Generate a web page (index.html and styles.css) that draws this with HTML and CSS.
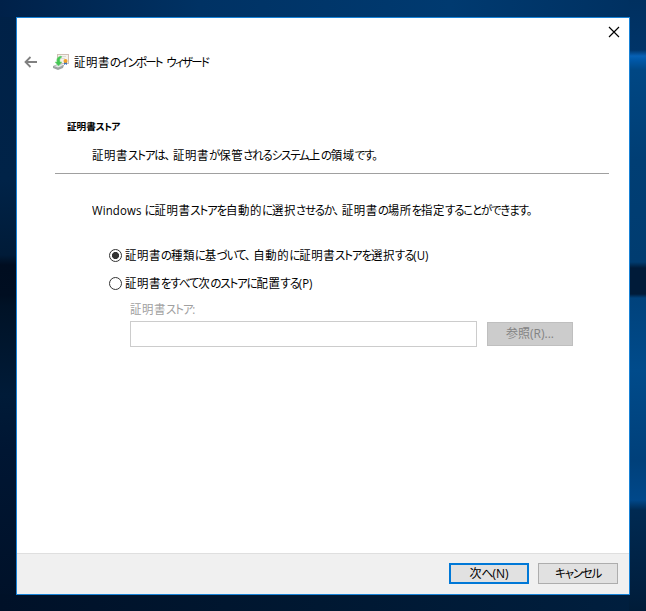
FILE: index.html
```html
<!DOCTYPE html>
<html lang="ja">
<head>
<meta charset="utf-8">
<title>証明書のインポート ウィザード</title>
<link rel="stylesheet" href="styles.css">
</head>
<body>
<main class="window">
  <button class="close" aria-label="閉じる"><svg width="12" height="12" viewBox="0 0 12 12"><path d="M1 1l10 10M11 1L1 11" stroke="#000" stroke-width="1.15" fill="none"/></svg></button>
  <header class="titlebar">
    <svg class="back" width="14" height="12" viewBox="0 0 14 12"><path d="M13 6H2M6.500 1L1.500 6l5 5" fill="none" stroke="#808080" stroke-width="1.8"/></svg>
    <svg class="cert" width="16" height="16" viewBox="0 0 16 16">
      <rect x="4.500" y=".5" width="11" height="9" fill="#f5f2ed" stroke="#d0bfb4"/>
      <path d="M6 2.500h7M7 4.500h5" stroke="#ddd9d6"/>
      <path d="M0 12l5-2 6 1-1 3-5 2-5-2z" fill="#9da3a3"/>
      <path d="M1 12l5-1.500 4 1-5 2z" fill="#e2e6e5"/>
      <path d="M8 2C4 3 3.500 5 4 8L2 8l3.500 4L9 8H7C6.500 5 7 4 9 3z" fill="#43c653" stroke="#79d481" stroke-width=".5"/>
      <path d="M11 8v3l1.500-1 1.500 1V8z" fill="#3d73bd"/>
      <circle cx="12.500" cy="7" r="2" fill="#efa126"/>
    </svg>
    <h1 class="line fit title">証明書<span class="k">のインポート ウィザード</span></h1>
  </header>
  <section class="intro">
    <h2 class="line heading">証明書<span class="k">ストア</span></h2>
    <p class="line fit desc">証明書<span class="k">ストアは<span class="c">、</span></span>証明書<span class="k">が</span>保管<span class="k">されるシステム</span>上<span class="k">の</span>領域<span class="k">です。</span></p>
  </section>
  <section class="content">
    <p class="line fit lead"><span class="latin">Windows </span><span class="k">に</span>証明書<span class="k">ストアを</span>自動的<span class="k">に</span>選択<span class="k">させるか<span class="c">、</span></span>証明書<span class="k">の</span>場所<span class="k">を</span>指定<span class="k">することができます。</span></p>
    <label class="option"><input type="radio" name="store" checked><span class="line fit">証明書<span class="k">の</span>種類<span class="k">に</span>基<span class="k">づいて<span class="c">、</span></span>自動的<span class="k">に</span>証明書<span class="k">ストアを</span>選択<span class="k">する</span><span class="latin">(U)</span></span></label>
    <label class="option"><input type="radio" name="store"><span class="line fit">証明書<span class="k">をすべて</span>次<span class="k">のストアに</span>配置<span class="k">する</span><span class="latin">(P)</span></span></label>
    <div class="store">
      <label class="line fit storelabel" for="path">証明書<span class="k">ストア</span>:</label>
      <div class="row"><input id="path" type="text" disabled><button class="button browse" disabled><span class="line">参照(R)...</span></button></div>
    </div>
  </section>
  <footer class="footer">
    <button class="button primary"><span class="line">次<span class="k">へ</span>(N)</span></button>
    <button class="button"><span class="line cancel"><span class="k">キャンセル</span></span></button>
  </footer>
</main>
</body>
</html>
```
FILE: styles.css
```css
* { box-sizing: border-box; }
body {
  margin: 0;
  width: 646px;
  height: 611px;
  padding: 17px 16px 16px;
  overflow: hidden;
  font: 12px/18px "Open Sans", "Noto Sans CJK JP", sans-serif;
  color: #000;
  background:
    linear-gradient(to bottom, #003060 0, #003468 50px, #0761b5 56px, #0058a8 60px, #004784 70px, #003e74 160px, #003c70 262px, #001b39 268px, #001b39 294px, #00427c 298px, #004b8b 370px, #00407a 460px, #00488a 500px, #002a52 510px, #001f3f 590px, #001c38 611px) right / 17px 100% no-repeat,
    linear-gradient(to right, #002149 0, #003264 200px, #003a70 450px, #003060 646px) top / 100% 17px no-repeat,
    linear-gradient(to right, #001128 0, #001832 320px, #001f3f 646px) bottom / 100% 17px no-repeat,
    linear-gradient(to bottom, #002147 0, #002348 180px, #001b38 255px, #000d20 265px, #000e21 295px, #001226 305px, #001b38 395px, #001633 450px, #001128 611px);
}
button, input { font: inherit; margin: 0; }
h1, h2, p { margin: 0; font-size: 12px; font-weight: 400; }
.window {
  position: relative;
  width: 614px;
  height: 578px;
  border: 1px solid #1883d7;
  background: #fff;
  display: flex;
  flex-direction: column;
}
.close {
  position: absolute;
  top: 8px;
  right: 9px;
  width: 12px;
  height: 12px;
  padding: 0;
  border: 0;
  background: none;
}
.close svg, .titlebar svg { display: block; }
.titlebar {
  display: flex;
  align-items: center;
  height: 16px;
  margin: 36px 0 0 7px;
}
.cert { margin-left: 15px; }
.title { margin: 2px 0 0 5px; --kana: -1.8px; word-spacing: 3.500px; }
.line { display: block; white-space: nowrap; }
/* Kanji keep a 12px pitch while kana are set condensed */
.fit {
  letter-spacing: 0.63px;
  transform: scaleX(0.95);
  transform-origin: left center;
}
.k { font-feature-settings: "palt"; letter-spacing: var(--kana, -1.15px); }
.c { margin-right: 4px; }
.latin { letter-spacing: 0; }
.intro {
  height: 57px;
  margin: 47px 20px 0 38px;
  padding-left: 12px;
  border-bottom: 1px solid #a0a0a0;
}
.heading { padding-top: 1px; font-size: 9.600px; font-weight: 700; --kana: -0.7px; }
.desc { margin: 11px 0 0 25px; }
.content { margin: 28px 0 0 75px; }
.lead { --kana: -1.2px; }
.lead .latin { letter-spacing: 0.15px; }
.option { display: flex; align-items: center; height: 18px; margin: 10px 0 0 17px; }
.lead + .option { margin-top: 27px; }
input[type="radio"] {
  appearance: none;
  width: 13px;
  height: 13px;
  margin: 0 3px 1px 0;
  border: 1px solid #333;
  border-radius: 50%;
  background: #fff;
}
input[type="radio"]:checked { background: radial-gradient(circle, #333 3.200px, #fff 3.900px); }
.store { margin: 8px 0 0 38px; }
.storelabel { color: #a0a0a0; }
.row { display: flex; align-items: center; margin-top: 2px; }
#path {
  width: 347px;
  height: 26px;
  margin-right: 10px;
  border: 1px solid #ccc;
  background: #fff;
}
.button {
  display: flex;
  align-items: center;
  justify-content: center;
  width: 80px;
  height: 21px;
  padding: 0;
  color: #000;
  background: #e1e1e1;
  border: 1px solid #adadad;
}
.browse { width: 86px; height: 24px; color: #838383; background: #ccc; border-color: #bfbfbf; }
.primary { border: 2px solid #0078d7; }
.cancel { --kana: -1.2px; transform: scaleX(0.95); }
.footer {
  display: flex;
  justify-content: flex-end;
  align-items: flex-start;
  gap: 9px;
  height: 41px;
  margin-top: auto;
  padding: 9px 11px 0 0;
  background: #f0f0f0;
  border-top: 1px solid #dfdfdf;
}
```
